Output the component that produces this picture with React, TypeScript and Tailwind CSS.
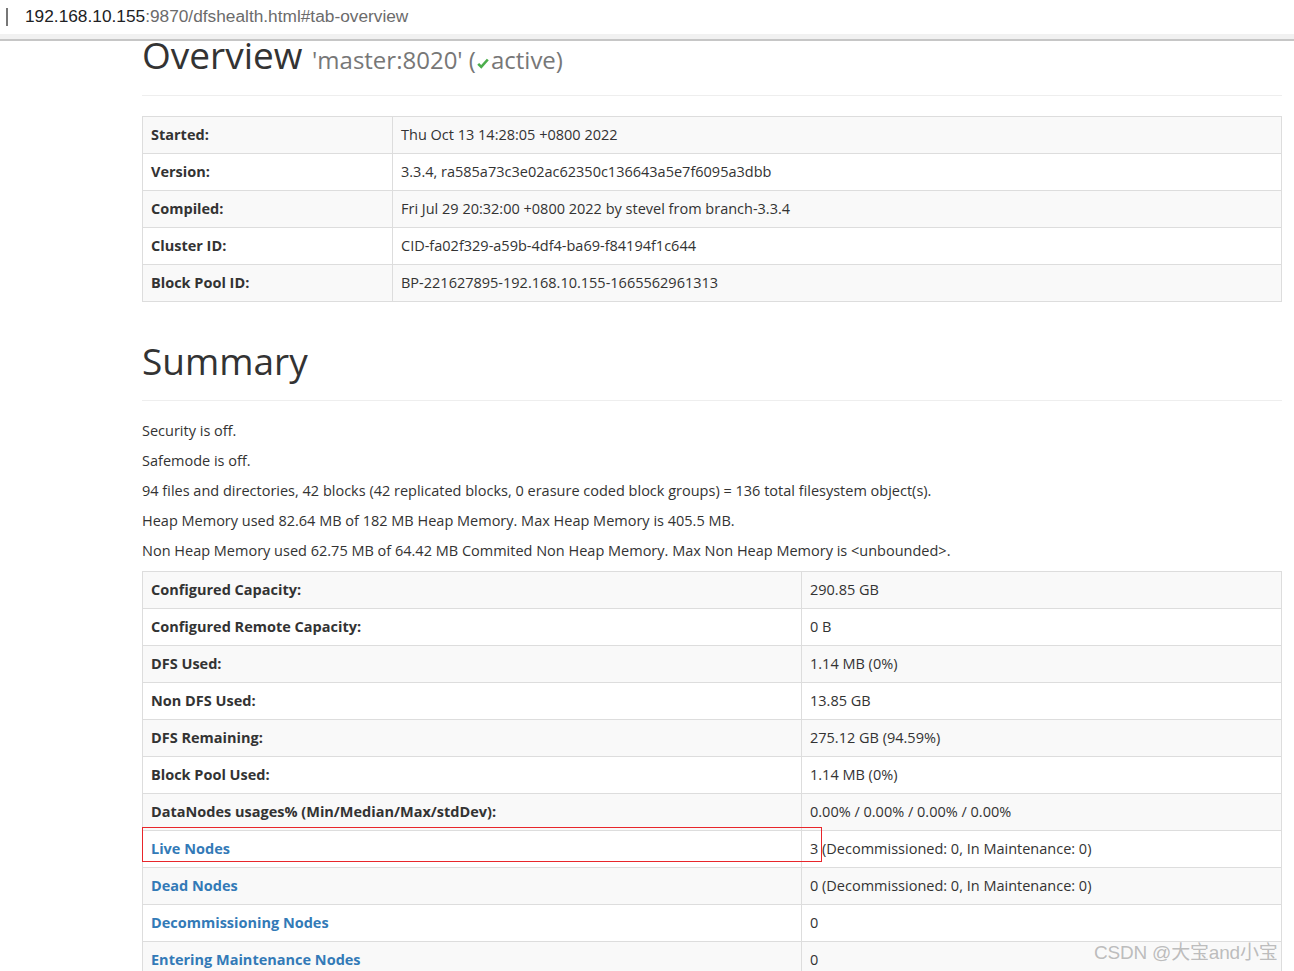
import React from "react";

const font = { fontFamily: '"Open Sans", "Noto Sans CJK SC", sans-serif' };

const overview: [string, string][] = [
  ["Started:", "Thu Oct 13 14:28:05 +0800 2022"],
  ["Version:", "3.3.4, ra585a73c3e02ac62350c136643a5e7f6095a3dbb"],
  ["Compiled:", "Fri Jul 29 20:32:00 +0800 2022 by stevel from branch-3.3.4"],
  ["Cluster ID:", "CID-fa02f329-a59b-4df4-ba69-f84194f1c644"],
  ["Block Pool ID:", "BP-221627895-192.168.10.155-1665562961313"],
];

const summary: [string, string, boolean][] = [
  ["Configured Capacity:", "290.85 GB", false],
  ["Configured Remote Capacity:", "0 B", false],
  ["DFS Used:", "1.14 MB (0%)", false],
  ["Non DFS Used:", "13.85 GB", false],
  ["DFS Remaining:", "275.12 GB (94.59%)", false],
  ["Block Pool Used:", "1.14 MB (0%)", false],
  ["DataNodes usages% (Min/Median/Max/stdDev):", "0.00% / 0.00% / 0.00% / 0.00%", false],
  ["Live Nodes", "3 (Decommissioned: 0, In Maintenance: 0)", true],
  ["Dead Nodes", "0 (Decommissioned: 0, In Maintenance: 0)", true],
  ["Decommissioning Nodes", "0", true],
  ["Entering Maintenance Nodes", "0", true],
];

function Table({ rows, labelW }: { rows: [string, string, boolean?][]; labelW: string }) {
  return (
    <table className="w-full border-collapse border border-[#ddd] text-[14.5px] leading-5 text-[#333]">
      <tbody>
        {rows.map(([k, v, link], i) => (
          <tr key={k} className={i % 2 === 0 ? "bg-[#f9f9f9]" : "bg-white"}>
            <th className={`${labelW} border border-[#ddd] p-2 text-left font-bold ${link ? "text-[#337ab7]" : "text-[#333]"}`}>
              {k}
            </th>
            <td className="border border-[#ddd] p-2">{v}</td>
          </tr>
        ))}
      </tbody>
    </table>
  );
}

export default function App() {
  return (
    <div className="relative min-h-[971px] w-[1294px] overflow-hidden bg-white" style={font}>
      {/* address bar */}
      <div className="h-[34px] bg-white flex items-center">
        <div className="ml-[6px] h-[18px] w-[2px] bg-[#777]" />
        <div className="ml-[17px] text-[17.3px]" style={{ fontFamily: '"Liberation Sans", Arial, sans-serif' }}>
          <span className="text-[#202124]">192.168.10.155</span>
          <span className="text-[#6b6b6b]">:9870/dfshealth.html#tab-overview</span>
        </div>
      </div>
      <div className="h-[5px] bg-[#f1f1f1]" />
      <div className="h-[2px] bg-[#c6c6c6]" />

      <div className="ml-[142px] w-[1140px] -mt-[10px]">
        <div className="border-b border-[#eee] pb-[9px] mb-5">
          <h1 className="text-[37px] leading-[40px] pt-[4px] mb-[6px] text-[#333] font-normal">
            Overview{" "}
            <small className="text-[24px] text-[#777]">
              'master:8020' (
              <svg viewBox="0 0 16 16" className="inline-block w-[14px] h-[14px] -mb-[1px] mr-[1px]">
                <path d="M2.5 9 L6 12.5 L13.5 4" fill="none" stroke="#4cae4c" strokeWidth="3" />
              </svg>
              active)
            </small>
          </h1>
        </div>
        <Table rows={overview.map(([a, b]) => [a, b, false])} labelW="w-[250px]" />

        <div className="mt-[39px] border-b border-[#eee] pb-[9px] mb-5">
          <h1 className="text-[37px] leading-[40px] mb-[10px] text-[#333] font-normal">Summary</h1>
        </div>
        <div className="text-[14.5px] leading-5 text-[#333]">
          <p className="mb-[10px]">Security is off.</p>
          <p className="mb-[10px]">Safemode is off.</p>
          <p className="mb-[10px]">
            94 files and directories, 42 blocks (42 replicated blocks, 0 erasure coded block groups) = 136 total filesystem object(s).
          </p>
          <p className="mb-[10px]">Heap Memory used 82.64 MB of 182 MB Heap Memory. Max Heap Memory is 405.5 MB.</p>
          <p className="mb-[10px]">
            Non Heap Memory used 62.75 MB of 64.42 MB Commited Non Heap Memory. Max Non Heap Memory is &lt;unbounded&gt;.
          </p>
        </div>
        <Table rows={summary} labelW="w-[659px]" />
      </div>

      {/* red highlight box */}
      <div className="absolute left-[142px] top-[827px] h-[35px] w-[680px] border border-[#e8262b]" />
      {/* watermark */}
      <div className="absolute left-[1094px] top-[939px] text-[19px] text-[#b5b5b5]/90 tracking-[-0.2px]" style={{ fontFamily: '"Liberation Sans", "Noto Sans CJK SC", sans-serif' }}>
        CSDN @大宝and小宝
      </div>
    </div>
  );
}
